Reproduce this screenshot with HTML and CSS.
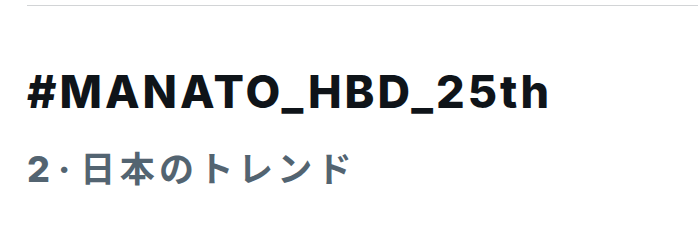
FILE: index.html
```html
<!DOCTYPE html>
<html lang="ja">
<head>
<meta charset="utf-8">
<link rel="stylesheet" href="styles.css">
</head>
<body>
<div class="divider"></div>
<div class="trend">
  <div class="title">#MANATO_HBD_25th</div>
  <div class="meta"><span class="rank">2</span><span class="dot">·</span><span class="where">日本のトレンド</span></div>
</div>
</body>
</html>
```
FILE: styles.css
```css
html, body {
  margin: 0;
  padding: 0;
  background: #ffffff;
}
body {
  width: 698px;
  height: 243px;
  overflow: hidden;
  font-family: Inter, "Noto Sans CJK JP", sans-serif;
}
.divider {
  margin: 5px 0 0 27px;
  height: 1px;
  background: #d2d4d6;
}
.trend {
  padding: 60px 0 0 27px;
}
.title {
  font-size: 45px;
  font-weight: 800;
  line-height: 52px;
  letter-spacing: 3px;
  color: #0f1419;
}
.meta {
  display: flex;
  align-items: baseline;
  margin-top: 31px;
  font-size: 35px;
  font-weight: 700;
  line-height: 40px;
  color: #536471;
}
.rank {
  font-size: 36px;
  font-weight: 800;
}
.dot {
  margin-left: 8px;
  font-weight: 800;
}
.where {
  margin-left: 10px;
  letter-spacing: 4.4px;
}
```
